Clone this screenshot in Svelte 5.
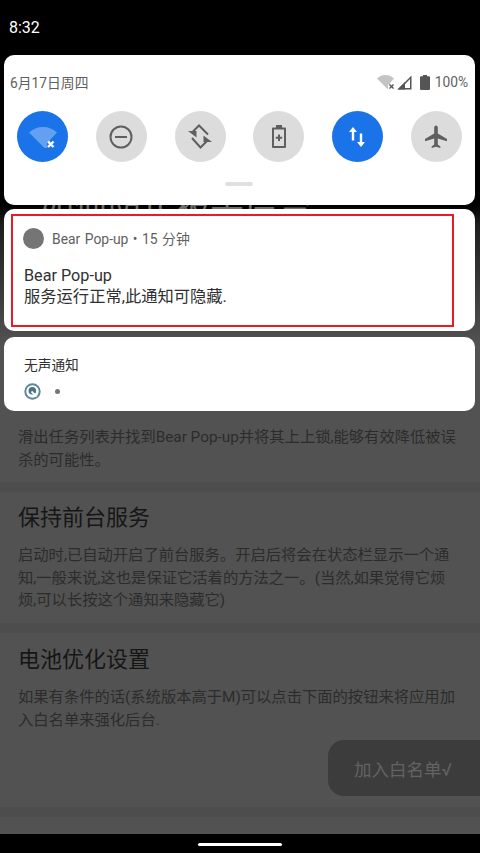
<script>
  const tiles = [
    { name: 'wifi', on: true },
    { name: 'dnd', on: false },
    { name: 'rotate', on: false },
    { name: 'saver', on: false },
    { name: 'data', on: true },
    { name: 'plane', on: false }
  ]
</script>

<div class="screen">
  <!-- app sitting behind the shade -->
  <div class="behind">
    <section class="sec first">
      <h1>如何防止被杀后台</h1>
      <p>滑出任务列表并找到Bear Pop-up并将其上上锁,能够有效降低被误杀的可能性。</p>
    </section>
    <section class="sec">
      <h2>保持前台服务</h2>
      <p>启动时,已自动开启了前台服务。开启后将会在状态栏显示一个通知,一般来说,这也是保证它活着的方法之一。(当然,如果觉得它烦烦,可以长按这个通知来隐藏它)</p>
    </section>
    <section class="sec">
      <h2>电池优化设置</h2>
      <p>如果有条件的话(系统版本高于M)可以点击下面的按钮来将应用加入白名单来强化后台.</p>
      <div class="btn-row"><div class="btn">加入白名单√</div></div>
    </section>
    <div class="sec tail"></div>
  </div>

  <div class="shade">
    <div class="status">8:32</div>

    <div class="qs">
      <div class="qs-top">
        <span>6月17日周四</span>
        <div class="sys">
          <svg width="18" height="16" viewBox="0 0 18 16">
            <path d="M0 4.500C2.500 2 5.500 1 8.500 1s6 1 8.500 3.500L13 9v1.500h-2V15h-.5z" fill="#c4c4c4"/>
            <path d="M12.500 10.500l4 4m0-4l-4 4" stroke="#555" stroke-width="1.400"/>
          </svg>
          <svg class="sig" width="15" height="15" viewBox="0 0 15 15">
            <path d="M14.500 0.500V14.500H0.500zM13 4L4.300 13H13z" fill="#555" fill-rule="evenodd"/>
            <path d="M0.500 14.500L8 7V14.500z" fill="#555"/>
          </svg>
          <svg class="bat" width="10" height="15" viewBox="0 0 10 15">
            <path d="M3 0h4v1.300h2a1 1 0 0 1 1 1V14a1 1 0 0 1-1 1H1a1 1 0 0 1-1-1V2.300a1 1 0 0 1 1-1h2z" fill="#555"/>
          </svg>
          <span class="pct">100%</span>
        </div>
      </div>

      <div class="tiles">
        {#each tiles as t}
          <div class="tile" class:on={t.on}>
            {#if t.name === 'wifi'}
              <svg width="30" height="26" viewBox="0 0 30 26">
                <path d="M1 8.500C4.500 5 9.500 3 15 3s10.500 2 14 5.500L22 16v2h-3v6h-2.500z" fill="#64a0f2"/>
                <path d="M20 17.500l5.500 5.500m0-5.500L20 23" stroke="#fff" stroke-width="2.400"/>
              </svg>
            {:else if t.name === 'dnd'}
              <svg width="26" height="26" viewBox="0 0 26 26">
                <circle cx="13" cy="13" r="10.500" fill="none" stroke="#5f5f5f" stroke-width="2"/>
                <path d="M7 13h12" stroke="#5f5f5f" stroke-width="2"/>
              </svg>
            {:else if t.name === 'rotate'}
              <svg width="26" height="27" viewBox="0 0 26 27" fill="none" stroke="#5f5f5f" stroke-width="2">
                <path d="M6 8.500L12 2.500l9 9"/>
                <path d="M5 15l8.500 9.500L20 18"/>
                <path d="M1 8h8.500v6.500z" fill="#5f5f5f" stroke="none"/>
                <path d="M25 19h-8.500v-6.500z" fill="#5f5f5f" stroke="none"/>
              </svg>
            {:else if t.name === 'saver'}
              <svg width="14" height="23" viewBox="0 0 14 23">
                <path d="M4 0h6v2.500h3a1 1 0 0 1 1 1V22a1 1 0 0 1-1 1H1a1 1 0 0 1-1-1V3.500a1 1 0 0 1 1-1h3zM2 4.500V21h10V4.500z" fill="#5f5f5f" fill-rule="evenodd"/>
                <path d="M7 9.500v6.500M3.800 12.800h6.400" stroke="#5f5f5f" stroke-width="2"/>
              </svg>
            {:else if t.name === 'data'}
              <svg width="16" height="20" viewBox="0 0 16 20" fill="#fff">
                <path d="M4 0l4 5H5.200V13.500H2.800V5H0z"/>
                <path d="M12 20l-4-5h2.800V6.500h2.400V15H16z"/>
              </svg>
            {:else}
              <svg width="24" height="24" viewBox="0 0 24 24">
                <path d="M12 0.500c1.100 0 1.800 1 1.800 2.200V8.500L23 14v2.300l-9.200-2.800v6l2.600 2V23L12 21.800 7.600 23v-1.500l2.600-2v-6L1 16.300V14l9.200-5.500V2.700C10.200 1.500 10.900.5 12 .5z" fill="#5f5f5f"/>
              </svg>
            {/if}
          </div>
        {/each}
      </div>
      <div class="handle"></div>
    </div>

    <div class="card notif">
      <div class="n-head">
        <i class="app-ic"></i>
        <span>Bear Pop-up • 15 分钟</span>
      </div>
      <div class="n-title">Bear Pop-up</div>
      <div class="n-body">服务运行正常,此通知可隐藏.</div>
      <div class="mark"></div>
    </div>

    <div class="card silent">
      <div class="s-title">无声通知</div>
      <div class="s-row">
        <svg width="17" height="17" viewBox="0 0 17 17" fill="none">
          <circle cx="8.500" cy="8.500" r="7.200" stroke="#5d8899" stroke-width="2"/>
          <circle cx="8.300" cy="7.800" r="3.800" fill="#4a7486"/>
          <path d="M7.500 8.500l5 5" stroke="#fff" stroke-width="1.800"/>
        </svg>
        <i class="s-dot"></i>
      </div>
    </div>
  </div>

  <div class="nav"><i></i></div>
</div>

<style>
  :global(body) {
    margin: 0;
    background: #000;
  }

  .screen {
    position: relative;
    width: 480px;
    height: 853px;
    overflow: hidden;
    background: #525252;
    font-family: Roboto, "Noto Sans CJK SC", sans-serif;
  }

  .behind {
    position: absolute;
    inset: 0;
    display: flex;
    flex-direction: column;
    gap: 10px;
    background: #4d4d4d;
  }

  .sec {
    flex-shrink: 0;
    background: #525252;
    padding: 0 18px;
    box-sizing: border-box;
  }

  .sec.first {
    height: 482px;
    padding-top: 193px;
    background: linear-gradient(#000 0, #000 205px, #1e1e1e 225px, #525252 345px);
  }

  h1 {
    margin: 0 0 205px 22px;
    color: #6e6e6e;
    font-size: 34px;
    font-weight: 400;
    line-height: 28px;
  }

  .sec h2 {
    margin: 0;
    padding-top: 10px;
    font-size: 22px;
    font-weight: 400;
    line-height: 32px;
    color: #161616;
  }

  .sec p {
    margin: 10px 0 0;
    font-size: 15.300px;
    line-height: 22.700px;
    color: #2c2c2c;
  }

  .sec.first p { margin: 0; }

  .sec:nth-child(2) { height: 131px; }
  .sec:nth-child(3) h2 { padding-top: 11px; }

  .btn-row {
    display: flex;
    justify-content: flex-end;
    margin: 9px -18px 0 0;
    padding-bottom: 11px;
  }

  .btn {
    width: 152px;
    height: 56px;
    padding-left: 26px;
    box-sizing: border-box;
    display: flex;
    align-items: center;
    background: #3c3c3c;
    border-radius: 16px 0 0 16px;
    color: #636363;
    font-size: 17.500px;
  }

  .tail { height: 40px; }

  .shade {
    position: absolute;
    inset: 0;
    padding: 0 5px 0 4px;
    display: flex;
    flex-direction: column;
  }

  .status {
    height: 55px;
    box-sizing: border-box;
    padding: 18px 0 0 5px;
    color: #fff;
    font-size: 16px;
    line-height: 20px;
  }

  .qs {
    height: 150px;
    box-sizing: border-box;
    padding: 0 7px 0 6px;
    background: #fff;
    border-radius: 10px;
    display: flex;
    flex-direction: column;
  }

  .qs-top {
    height: 56px;
    padding-bottom: 2px;
    box-sizing: border-box;
    display: flex;
    justify-content: space-between;
    align-items: center;
    font-size: 13.800px;
    color: #5f5f5f;
  }

  .sys {
    display: flex;
    align-items: center;
    gap: 1px;
  }

  .sig { margin-left: 1px; }
  .bat { margin-left: 7px; }
  .pct { margin-left: 4px; }

  .tiles {
    display: flex;
    justify-content: space-between;
    padding: 0 6.300px 0 7.300px;
  }

  .tile {
    width: 51px;
    height: 51px;
    border-radius: 50%;
    background: #dcdcdc;
    display: flex;
    align-items: center;
    justify-content: center;
  }

  .tile.on { background: #1a73e8; }

  .handle {
    width: 28px;
    height: 4px;
    margin: 20px auto 0;
    border-radius: 2px;
    background: #e0e0e0;
  }

  .card {
    background: #fff;
    border-radius: 10px;
    position: relative;
  }

  .notif {
    height: 122px;
    margin-top: 4px;
    box-sizing: border-box;
    padding: 18px 20px 0;
  }

  .n-head {
    display: flex;
    align-items: center;
    height: 22px;
    font-size: 13.900px;
    color: #5f5f5f;
    gap: 8px;
  }

  .n-head span { word-spacing: 1px; }

  .app-ic {
    width: 21px;
    height: 21px;
    border-radius: 50%;
    background: #757575;
    margin-left: -1px;
  }

  .n-title, .n-body {
    line-height: 21px;
    color: #303030;
  }

  .n-title { margin-top: 16px; font-size: 16.200px; }
  .n-body { font-size: 16.300px; }

  .mark {
    position: absolute;
    left: 7px;
    top: 5px;
    width: 443px;
    height: 113px;
    box-sizing: border-box;
    border: 2px solid #e81c24;
  }

  .silent {
    height: 74px;
    margin-top: 6px;
    box-sizing: border-box;
    padding: 18px 20px 0;
  }

  .s-title {
    font-size: 13.700px;
    line-height: 20px;
    color: #303030;
  }

  .s-row {
    margin-top: 8px;
    display: flex;
    align-items: center;
    gap: 14px;
    height: 17px;
  }

  .s-dot {
    width: 5px;
    height: 5px;
    border-radius: 50%;
    background: #757575;
  }

  .nav {
    position: absolute;
    left: 0;
    right: 0;
    bottom: 0;
    height: 19px;
    background: #000;
    display: flex;
    justify-content: center;
  }

  .nav i {
    width: 84px;
    height: 3px;
    margin-top: 9px;
    border-radius: 2px;
    background: #fff;
  }
</style>
